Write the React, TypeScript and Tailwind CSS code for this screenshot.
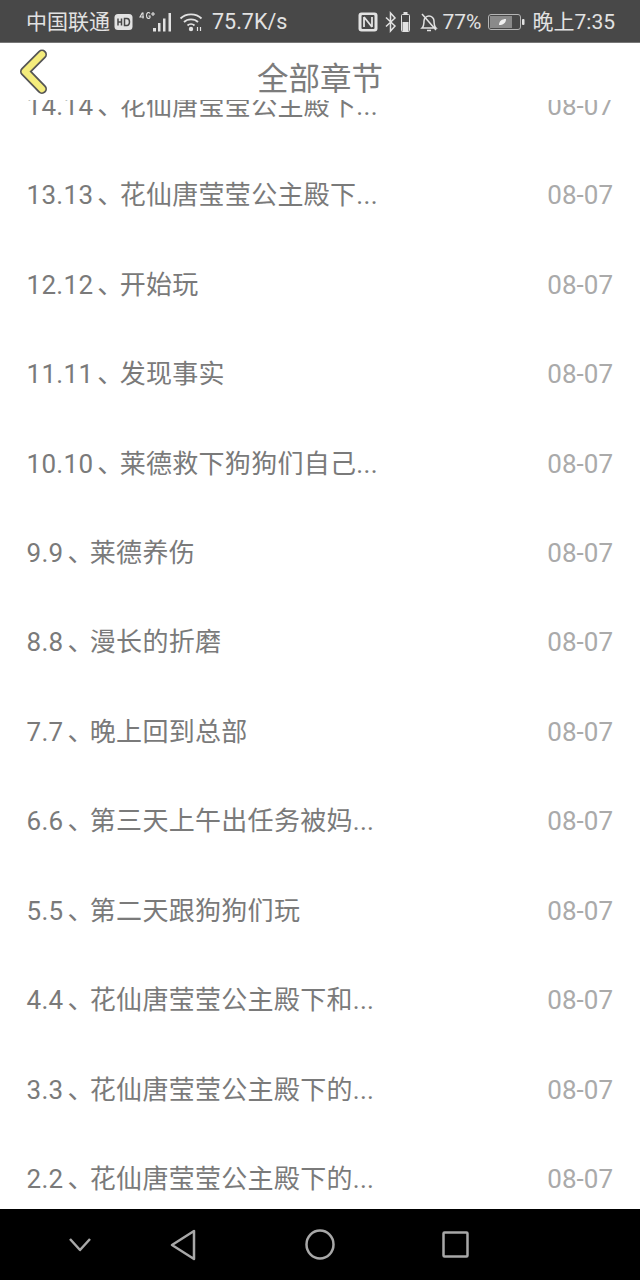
import React from "react";

const rows = [
  ["14.14", "花仙唐莹莹公主殿下..."],
  ["13.13", "花仙唐莹莹公主殿下..."],
  ["12.12", "开始玩"],
  ["11.11", "发现事实"],
  ["10.10", "莱德救下狗狗们自己..."],
  ["9.9", "莱德养伤"],
  ["8.8", "漫长的折磨"],
  ["7.7", "晚上回到总部"],
  ["6.6", "第三天上午出任务被妈..."],
  ["5.5", "第二天跟狗狗们玩"],
  ["4.4", "花仙唐莹莹公主殿下和..."],
  ["3.3", "花仙唐莹莹公主殿下的..."],
  ["2.2", "花仙唐莹莹公主殿下的..."],
];

const font = "font-['Roboto','Noto_Sans_CJK_SC',sans-serif]";

function StatusBar() {
  return (
    <div className="flex h-[43px] shrink-0 items-center justify-between border-b border-b-[#777] bg-[#484848] pl-[26px] pr-[25px] pt-[2px] text-[21px] leading-none text-[#e2e2e2]">
      <div className="flex items-center">
        <span>中国联通</span>
        <svg width="19" height="18" viewBox="0 0 19 18" className="ml-[4px]">
          <rect x="0.500" y="1" width="18" height="16" rx="3.500" fill="#e2e2e2" />
          <path d="M4 5.500v7M4 9h3.500M7.500 5.500v7M10.500 5.500v7h2.500a2.500 3.500 0 0 0 0-7z" fill="none" stroke="#484848" strokeWidth="1.500" />
        </svg>
        <svg width="35" height="22" viewBox="0 0 35 22" className="ml-[6px]">
          <path d="M3.500 1.500L1 6h4M4 1.500v6M11 2.500C10 1 7.500 1 7.500 4.500s3 3.500 3.500 2V5H9.500M14 1v4M12 3h4" fill="none" stroke="#e2e2e2" strokeWidth="1.100" />
          <rect x="14" y="17" width="3" height="3.500" fill="#e2e2e2" />
          <rect x="19" y="12" width="2.500" height="8.500" fill="#e2e2e2" />
          <rect x="24" y="7.500" width="2.500" height="13" fill="#e2e2e2" />
          <rect x="29.500" y="2" width="2.500" height="18.500" fill="#e2e2e2" />
        </svg>
        <svg width="24" height="20" viewBox="0 0 24 20" className="ml-[5px]">
          <path d="M1.500 6.500C7 1 17 1 22.500 6.500M5 10c3.500-3.500 10.500-3.500 14 0M8.500 13.500c2-1.800 5-1.800 7 0" fill="none" stroke="#e2e2e2" strokeWidth="1.800" />
          <circle cx="12" cy="17" r="2.200" fill="#e2e2e2" />
          <path d="M18.500 15v4M21.500 19v-4" stroke="#e2e2e2" strokeWidth="1.200" />
        </svg>
        <span className="ml-[9px] text-[21.500px]">75.7K/s</span>
      </div>
      <div className="flex items-center">
        <svg width="20" height="20" viewBox="0 0 20 20">
          <rect x="0.500" y="0.500" width="19" height="19" rx="3" fill="#e2e2e2" />
          <rect x="3.500" y="3" width="13" height="14" rx="1" fill="#484848" />
          <path d="M6 5v10M14 5v10M6 5l8 10" fill="none" stroke="#e2e2e2" strokeWidth="1.800" />
        </svg>
        <svg width="26" height="24" viewBox="0 0 26 24" className="ml-[7px]">
          <path d="M1 7.500l9 8.500-4.500 5V3L10 8l-9 8.500" fill="none" stroke="#e2e2e2" strokeWidth="1.500" />
          <rect x="16.500" y="4.500" width="8" height="17" rx="1" fill="none" stroke="#e2e2e2" />
          <rect x="18.500" y="2" width="4" height="2" fill="#e2e2e2" />
          <rect x="17.500" y="12" width="6" height="9" fill="#e2e2e2" />
        </svg>
        <svg width="20" height="20" viewBox="0 0 20 20" className="ml-[8px]">
          <path d="M3 16c2-2 2-4 2-7a5 5 0 0 1 10 0c0 3 0 5 2 7zM8 18.500h4M3 2l14 16" fill="none" stroke="#e2e2e2" strokeWidth="1.500" />
        </svg>
        <span className="ml-[4px]">77%</span>
        <svg width="38" height="18" viewBox="0 0 38 18" className="ml-[6px]">
          <rect x="0.500" y="1.500" width="32" height="15" rx="2.500" fill="none" stroke="#b5b5b5" />
          <rect x="2" y="3" width="22" height="12" fill="#8a8a8a" />
          <path d="M11 12c0-4 3-6 7-6 0 4-3 6-7 6z" fill="#f0f0f0" />
          <rect x="34" y="6" width="2.500" height="6" rx="1" fill="#e2e2e2" />
        </svg>
        <span className="ml-[7px]">晚上7:35</span>
      </div>
    </div>
  );
}

function Header() {
  return (
    <div className="relative flex h-[57px] shrink-0 items-center justify-center bg-white pt-[17px]">
      <span className="text-[31.500px] leading-none text-[#7c7c7c]">全部章节</span>
      <svg width="32" height="46" viewBox="0 0 32 46" className="absolute left-[16px] top-[6px]">
        <path d="M26 5.500L9 22.500L26 40" fill="none" stroke="#555" strokeWidth="10" strokeLinecap="round" strokeLinejoin="round" />
        <path d="M26 5.500L9 22.500L26 40" fill="none" stroke="#f4ec7c" strokeWidth="6.500" strokeLinecap="round" strokeLinejoin="round" />
      </svg>
    </div>
  );
}

function Row({ num, title }: { num: string; title: string }) {
  return (
    <div className="flex h-[89.460px] shrink-0 items-center justify-between pl-[26.500px] pr-[27px] text-[26px] leading-none">
      <span className="tracking-[0.300px] text-[#7a7a7a]">
        {num}
        <span className="-mr-[4px] ml-[4px]">、</span>
        {title}
      </span>
      <span className="text-[#aaaaaa]">08-07</span>
    </div>
  );
}

function NavBar() {
  return (
    <div className="flex h-[71px] shrink-0 items-center bg-black">
      <svg width="640" height="71" viewBox="0 0 640 71" fill="none" stroke="#a8a8a8" strokeWidth="2.500" strokeLinejoin="round">
        <path d="M70 30l10 11 10-11" />
        <path d="M194 22v28l-22-14z" />
        <ellipse cx="320" cy="35.500" rx="13.500" ry="14" />
        <rect x="443.500" y="23.500" width="24" height="24" rx="1" />
      </svg>
    </div>
  );
}

export default function App() {
  return (
    <div className={`flex h-[1280px] w-[640px] flex-col overflow-hidden bg-white ${font}`}>
      <StatusBar />
      <Header />
      <div className="flex min-h-0 flex-1 flex-col overflow-hidden">
        <div className="-mt-[39px] flex flex-col">
          {rows.map((r, i) => (
            <Row key={i} num={r[0]} title={r[1]} />
          ))}
        </div>
      </div>
      <NavBar />
    </div>
  );
}
